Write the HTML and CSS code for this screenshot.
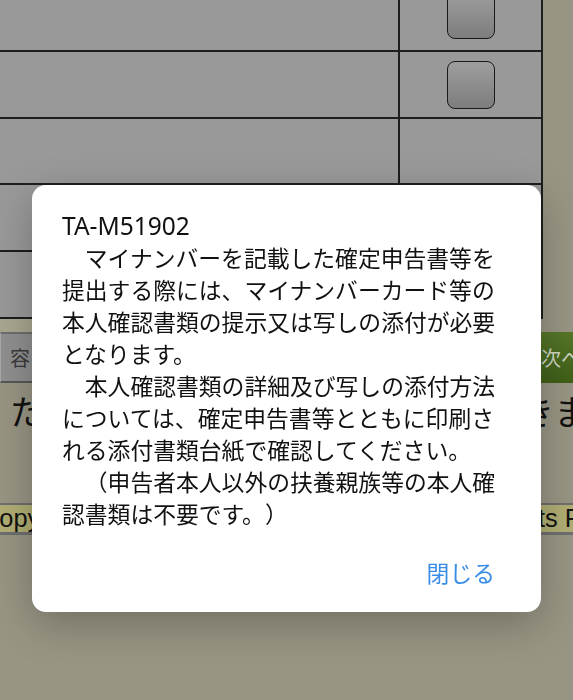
FILE: index.html
```html
<!DOCTYPE html>
<html lang="ja">
<head>
<meta charset="utf-8">
<title>確定申告書等作成コーナー</title>
<link rel="stylesheet" href="styles.css">
</head>
<body>
<main class="page">
  <div class="grid">
    <div class="cell cell-label"></div>
    <div class="cell cell-check"><span class="checkbox"></span></div>
    <div class="cell cell-label"></div>
    <div class="cell cell-check"><span class="checkbox"></span></div>
    <div class="cell cell-label"></div>
    <div class="cell cell-check"></div>
    <div class="cell cell-label"></div>
    <div class="cell cell-check"></div>
    <div class="cell cell-label"></div>
    <div class="cell cell-check"></div>
  </div>
  <div class="band"></div>
  <div class="tabbar">
    <div class="tab">容</div>
    <button class="next" type="button">次へ進む</button>
  </div>
  <h1 class="notice">ただいま確定申告書等の作成ができます</h1>
  <footer class="footer">
    <p class="copyright">Copyright (C) National Tax Agency Japan All Rights Reserved.</p>
  </footer>
</main>

<div class="overlay">
  <div class="dialog" role="alertdialog" aria-modal="true">
    <div class="msg">
      <p class="code">TA-M51902</p>
      <p>　マイナンバーを記載した確定申告書等を提出する際には、マイナンバーカード等の本人確認書類の提示又は写しの添付が必要となります。</p>
      <p>　本人確認書類の詳細及び写しの添付方法については、確定申告書等とともに印刷される添付書類台紙で確認してください。</p>
      <p>　（申告者本人以外の扶養親族等の本人確認書類は不要です。）</p>
    </div>
    <div class="actions">
      <button class="close" type="button">閉じる</button>
    </div>
  </div>
</div>
</body>
</html>
```

FILE: styles.css
```css
html, body {
  margin: 0;
  height: 100%;
  overflow: hidden;
}

body {
  background: #989584;
  font-family: "Noto Sans CJK JP", "Noto Sans", sans-serif;
  color: #111;
}

.page {
  width: 573px;
}

/* table */
.grid {
  display: grid;
  grid-template-columns: 400px 143px;
  grid-template-rows: 72px 67px 66px 67px 67px;
  margin-top: -20px;
  width: 543px;
}

.cell {
  box-sizing: border-box;
  background: #999999;
  border-bottom: 2px solid #1e1e1e;
  border-right: 2px solid #1e1e1e;
}

.cell-check {
  display: flex;
  align-items: center;
  justify-content: center;
}

.checkbox {
  display: block;
  width: 48px;
  height: 48px;
  box-sizing: border-box;
  border: 1.5px solid #1a1a1a;
  border-radius: 8px;
  background: linear-gradient(#9e9e9e, #7d7d7d);
}

.band {
  width: 541px;
  height: 13px;
  background: #a9a690;
}

/* tab bar */
.tabbar {
  display: flex;
  width: 660px;
  height: 51px;
}

.tab {
  flex: 1;
  box-sizing: border-box;
  display: flex;
  align-items: center;
  padding-left: 9px;
  background: #8f8f8f;
  border-top: 2px solid #6d6d6d;
  border-bottom: 2px solid #575757;
  border-left: 1px solid #a8a8a8;
  font-size: 20px;
  color: #3a3a3a;
}

.next {
  width: 150px;
  padding: 0 0 0 31px;
  border: 0;
  text-align: left;
  background: linear-gradient(#557629, #405f18);
  color: #cfd6c4;
  font-family: inherit;
  font-size: 20px;
}

/* notice */
.notice {
  margin: 7px 0 0 10px;
  font-size: 34px;
  line-height: 41px;
  font-weight: 400;
  white-space: nowrap;
  color: #111;
}

/* footer */
.footer {
  margin-top: 72px;
  border-top: 2px solid #6e6e6e;
  border-bottom: 3px solid #6e6e6e;
  background: #b0ae73;
  height: 27px;
  width: 700px;
}

.copyright {
  margin: 0 0 0 -19px;
  font-family: "Liberation Sans", Arial, sans-serif;
  font-size: 25.4px;
  line-height: 27px;
  white-space: nowrap;
  color: #111;
}

/* dialog */
.overlay {
  position: fixed;
  inset: 0;
  display: flex;
  justify-content: center;
  align-items: flex-start;
  padding-top: 185px;
  box-sizing: border-box;
}

.dialog {
  width: 509px;
  box-sizing: border-box;
  background: #fff;
  border-radius: 14px;
  padding: 25px 30px 23px;
  box-shadow: 0 12px 40px rgba(0, 0, 0, 0.25);
}

.msg {
  padding-right: 14px;
  text-spacing-trim: space-all;
}

.msg p {
  margin: 0;
  font-size: 22.8px;
  line-height: 32px;
  color: #111;
}

.msg .code {
  font-family: "Noto Sans", "Noto Sans CJK JP", sans-serif;
  font-size: 24.5px;
}

.actions {
  display: flex;
  justify-content: flex-end;
  margin-top: 27px;
  padding-right: 16px;
}

.close {
  padding: 0;
  border: 0;
  background: none;
  font-family: inherit;
  font-size: 22.8px;
  line-height: 32px;
  color: #3a8de6;
}
```
